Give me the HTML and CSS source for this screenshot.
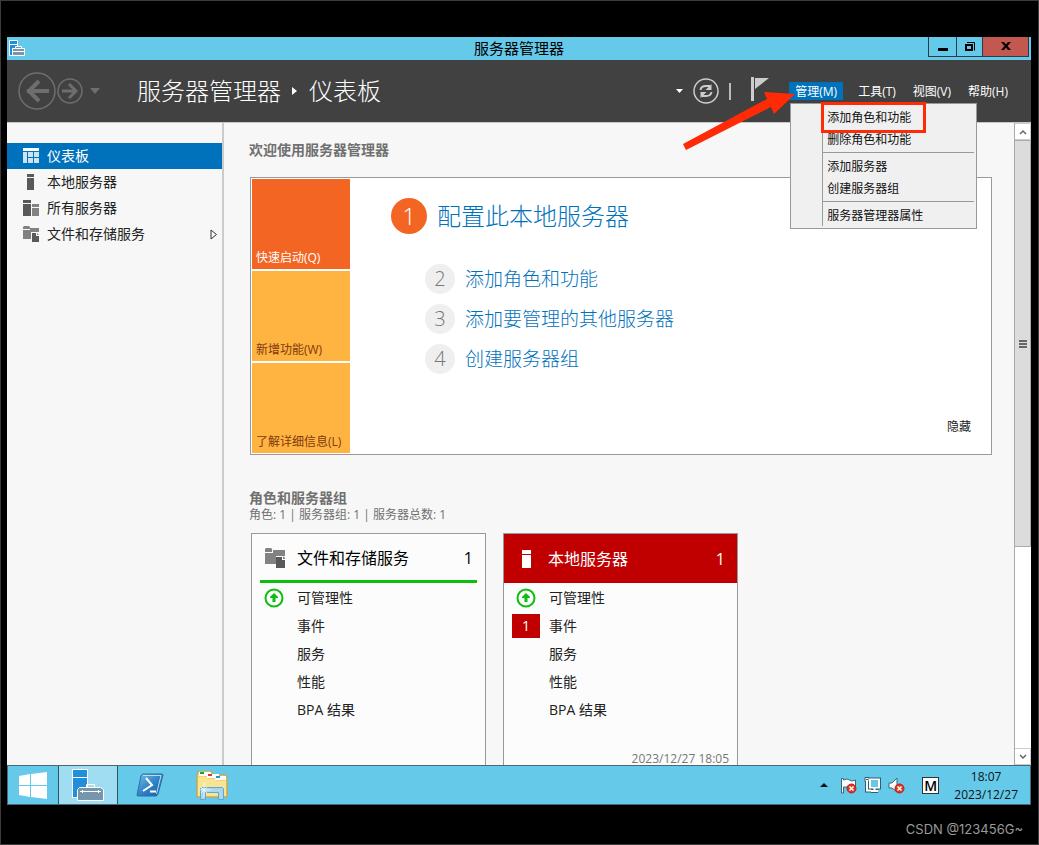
FILE: index.html
```html
<!DOCTYPE html>
<html lang="zh-CN">
<head>
<meta charset="utf-8">
<title>服务器管理器</title>
<link rel="stylesheet" href="styles.css">
</head>
<body>
<div class="desktop">
  <header class="titlebar">
    <svg class="app-icon" width="18" height="18" viewBox="0 0 18 18">
      <path d="M1.500 1.500h8v15h-8z" fill="#1f8fdc" stroke="#fff"/>
      <path d="M1 5.500h9" stroke="#fff"/>
      <path d="M4.500 9.500h3v-2h6v2h3v7h-12z" fill="#7795ab" stroke="#fff"/>
      <path d="M5 12.500h11M8 9.500h5" stroke="#fff"/>
    </svg>
    <h1 class="window-title">服务器管理器</h1>
    <div class="window-buttons">
      <button class="wb wb-min" aria-label="最小化"><svg width="12" height="12"><path d="M1 7h10v3H1z"/></svg></button>
      <button class="wb wb-max" aria-label="还原"><svg width="12" height="12" fill="none" stroke="#000"><path d="M2 4h6v5H2z" stroke-width="2"/><path d="M3 1.500h7.500v8" /></svg></button>
      <button class="wb wb-close" aria-label="关闭"><svg width="12" height="12"><path d="M1 1h3l2 2.500L8 1h3L7.500 5l3.500 4H8L6 6.500 4 9H1l3.500-4z"/></svg></button>
    </div>
  </header>

  <div class="toolbar">
    <nav class="history" aria-label="历史">
      <button class="plain" aria-label="后退"><svg width="38" height="38" fill="none" stroke="#6e6e6e"><circle cx="19" cy="19" r="18" stroke-width="1.500"/><path d="M9 19h22" stroke-width="4"/><path d="M21 9L11 19l10 10" stroke-width="4"/></svg></button>
      <button class="plain" aria-label="前进"><svg width="26" height="26" fill="none" stroke="#6e6e6e"><circle cx="13" cy="13" r="12" stroke-width="1.500"/><path d="M5 13h14" stroke-width="3"/><path d="M12 6l7 7-7 7" stroke-width="3"/></svg></button>
      <button class="plain caret-btn" aria-label="最近的页面"><svg width="10" height="6"><path d="M0 0h10L5 6z" fill="#6e6e6e"/></svg></button>
    </nav>
    <div class="breadcrumb">
      <span>服务器管理器</span>
      <svg width="6" height="10"><path d="M0 1l5 4-5 4z" fill="#fff"/></svg>
      <span>仪表板</span>
    </div>
    <div class="tools">
      <button class="plain" aria-label="更多"><svg width="7" height="4"><path d="M0 0h7L3.500 4z" fill="#fff"/></svg></button>
      <button class="plain" aria-label="刷新"><svg width="26" height="26" viewBox="0 0 26 26" fill="none" stroke="#ccc"><circle cx="13" cy="13" r="12" stroke-width="1.500"/><path d="M7.500 12q.5-4 5.500-4h4M18.500 14q-.5 4-5.500 4H9" stroke-width="2"/><path d="M18.500 6v6h-6zM7.500 20v-6h6z" fill="#ccc" stroke="none"/></svg></button>
      <span class="divider"></span>
      <button class="plain flag" aria-label="通知"><svg width="18" height="24"><path d="M0 0h3v24H0zM4 1h14L4 12z" fill="#ccc"/></svg></button>
    </div>
    <div class="menubar">
      <div class="menu-holder">
        <button class="menu-btn active">管理(M)</button>
        <div class="dropdown">
          <div class="dropdown-list">
            <button class="item">添加角色和功能</button>
            <button class="item">删除角色和功能</button>
            <hr>
            <button class="item">添加服务器</button>
            <button class="item">创建服务器组</button>
            <hr>
            <button class="item">服务器管理器属性</button>
          </div>
          <span class="highlight"></span>
        </div>
        <svg class="pointer" width="116" height="60" viewBox="0 0 116 60"><path d="M2 54L86 9l-3-7 31 2-21 20-3-7L5 60z" fill="#ff2a06"/></svg>
      </div>
      <button class="menu-btn">工具(T)</button>
      <button class="menu-btn">视图(V)</button>
      <button class="menu-btn">帮助(H)</button>
    </div>
  </div>

  <div class="body">
    <nav class="sidebar" aria-label="导航">
      <a class="side-item selected" href="#"><svg width="16" height="16"><path d="M0 0h16v3H0z" fill="#fff"/><path d="M0 4h4v11H0zM5 4h5v5H5zM11 4h5v5h-5zM5 10h5v5H5zM11 10h5v5h-5z" fill="#cce3f2"/></svg><span>仪表板</span></a>
      <a class="side-item" href="#"><svg width="16" height="16"><path d="M4 0h7v3H4zM4 4h7v12H4z" fill="#595959"/></svg><span>本地服务器</span></a>
      <a class="side-item" href="#"><svg width="16" height="16"><path d="M0 0h8v3H0zM0 4h8v12H0z" fill="#595959"/><path d="M9 4h7v3H9zM9 8h7v8H9z" fill="#828282"/></svg><span>所有服务器</span></a>
      <a class="side-item" href="#"><svg width="16" height="16"><path d="M0 1l1-1h5l1 1v2H0zM0 4h7V2h9v4H8v7H0z" fill="#828282"/><path d="M9 7h4v3h3v6H9z" fill="#595959"/><path d="M14 7l2 2H14z" fill="#828282"/></svg><span>文件和存储服务</span><svg class="expand" width="8" height="11" fill="none" stroke="#333"><path d="M1 1v9l5.500-4.500z"/></svg></a>
    </nav>

    <main class="content">
      <h2 class="section-title">欢迎使用服务器管理器</h2>
      <section class="welcome">
        <div class="tiles">
          <button class="tile hot">快速启动(Q)</button>
          <button class="tile">新增功能(W)</button>
          <button class="tile">了解详细信息(L)</button>
        </div>
        <div class="steps">
          <a class="step first" href="#"><span class="num">1</span><span>配置此本地服务器</span></a>
          <a class="step" href="#"><span class="num">2</span><span>添加角色和功能</span></a>
          <a class="step" href="#"><span class="num">3</span><span>添加要管理的其他服务器</span></a>
          <a class="step" href="#"><span class="num">4</span><span>创建服务器组</span></a>
        </div>
        <button class="hide-btn">隐藏</button>
      </section>

      <h2 class="section-title groups-title">角色和服务器组</h2>
      <p class="summary">角色: 1 | 服务器组: 1 | 服务器总数: 1</p>
      <div class="cards">
        <section class="card">
          <h3 class="card-head ok"><svg width="20" height="20"><path d="M0 1l1-1h5l1 1v3H0zM0 5h8V2h12v6h-9v8H0z" fill="#828282"/><path d="M11 9h6v3h3v8h-9z" fill="#595959"/><path d="M18 8l2 2v1h-2z" fill="#828282"/></svg><span>文件和存储服务</span><span class="count">1</span></h3>
          <ul class="rows">
            <li><span class="mark"><svg width="20" height="20"><circle cx="10" cy="10" r="8.500" fill="none" stroke="#0dbe0d" stroke-width="2"/><path d="M10 5l4 4v1h-2.500v4h-3v-4H6V9z" fill="#0dbe0d"/></svg></span>可管理性</li>
            <li><span class="mark"></span>事件</li>
            <li><span class="mark"></span>服务</li>
            <li><span class="mark"></span>性能</li>
            <li><span class="mark"></span>BPA 结果</li>
          </ul>
        </section>
        <section class="card">
          <h3 class="card-head alert"><svg width="20" height="20"><path d="M6 1h9v4H6zM6 6h9v13H6z" fill="#fff"/></svg><span>本地服务器</span><span class="count">1</span></h3>
          <ul class="rows">
            <li><span class="mark"><svg width="20" height="20"><circle cx="10" cy="10" r="8.500" fill="none" stroke="#0dbe0d" stroke-width="2"/><path d="M10 5l4 4v1h-2.500v4h-3v-4H6V9z" fill="#0dbe0d"/></svg></span>可管理性</li>
            <li><span class="mark bad">1</span>事件</li>
            <li><span class="mark"></span>服务</li>
            <li><span class="mark"></span>性能</li>
            <li><span class="mark"></span>BPA 结果</li>
          </ul>
          <p class="stamp">2023/12/27 18:05</p>
        </section>
      </div>
    </main>

    <div class="scrollbar">
      <button class="sb-btn" aria-label="向上滚动"><svg width="8" height="6" fill="none" stroke="#666" stroke-width="1.500"><path d="M1 5l3-3 3 3"/></svg></button>
      <div class="track"><div class="thumb"><svg width="8" height="8"><path d="M0 0h8v2H0zM0 3h8v2H0zM0 6h8v2H0z" fill="#666"/></svg></div></div>
      <button class="sb-btn" aria-label="向下滚动"><svg width="8" height="6" fill="none" stroke="#666" stroke-width="1.500"><path d="M1 1l3 3 3-3"/></svg></button>
    </div>
  </div>

  <footer class="taskbar">
    <button class="task start" aria-label="开始"><svg width="28" height="27"><path d="M0 4l11-2v11H0zM12 2l16-2v13H12zM0 14h11v11L0 23zM12 14h16v13l-16-2z" fill="#fff"/></svg></button>
    <button class="task running" aria-label="服务器管理器"><svg width="32" height="32"><path d="M.5.500h15v28H.5z" fill="#1f8fdc" stroke="#fff"/><path d="M0 8.500h16" stroke="#fff"/><path d="M14.500 18v-2.500h8V18" fill="none" stroke="#fff"/><path d="M5.500 20.500l2-2h21l3 2v11h-26z" fill="#7795ab" stroke="#fff"/><path d="M8 22.500h21M10.500 21v3M26.500 21v3" stroke="#fff"/></svg></button>
    <button class="task pinned" aria-label="PowerShell"><svg width="28" height="24" viewBox="0 0 28 24"><defs><linearGradient id="ps" x1="0" y1="0" x2="1" y2="1"><stop offset="0" stop-color="#7cc0e6"/><stop offset=".5" stop-color="#2f86c8"/><stop offset="1" stop-color="#1958a6"/></linearGradient></defs><path d="M7 1h19q1 0 1 1l-5 19q-1 2-2 2H2q-1 0-1-1L5 3q1-2 2-2z" fill="url(#ps)" stroke="#2c6da4"/><path d="M7 2.500h18L20.500 21" fill="none" stroke="#b8def2"/><path d="M10 5l6 7-9 6M14 18.500h6" fill="none" stroke="#fff" stroke-width="2"/></svg></button>
    <button class="task pinned" aria-label="文件资源管理器"><svg width="32" height="29" viewBox="0 0 32 29"><path d="M1 26V3l2-3h12l2 4h13l1 2v20z" fill="#f3d36b" stroke="#c99c35"/><path d="M3 1h12v4H3zM11 3h12v4H11zM19 5h11v4H19z" fill="#fff"/><path d="M4 1h4v2H4z" fill="#1ea32d"/><path d="M12 3h4v2h-4z" fill="#d43d24"/><path d="M20 5h4v2h-4z" fill="#2590e0"/><path d="M2 6h8l2 2h7l2 2h9v15H2z" fill="#f9e493"/><path d="M4.500 28.500v-11l1-1h21l1 1v11h-5v-7h-13v7z" fill="#a9d8ee" stroke="#5fa7cf"/><path d="M8 11v15M3 19h12M5 16l6 6M11 16l-6 6" stroke="#fff" stroke-opacity=".7"/></svg></button>
    <div class="tray">
      <button class="plain" aria-label="显示隐藏的图标"><svg width="8" height="4"><path d="M0 4h8L4 0z" fill="#111"/></svg></button>
      <button class="plain" aria-label="操作中心"><svg width="17" height="17"><path d="M1.500 16V1.500h2V3q4-2 6 0t6 0v7h-12v6z" fill="#fff" stroke="#3c6576"/><circle cx="11.500" cy="11.500" r="4.500" fill="#df3426" stroke="#b52318"/><path d="M9.500 9.500l4 4m0-4l-4 4" stroke="#fff" stroke-width="1.500"/></svg></button>
      <button class="plain" aria-label="网络"><svg width="17" height="16" fill="none"><path d="M6 2.500h9v8H6zM10.500 11v3M7 14h7M3 4v9.500h4" stroke="#315f72" stroke-width="4"/><path d="M1 .5h4v4H1z" fill="#fff" stroke="#315f72"/><path d="M6 2.500h9v8H6zM10.500 11v3M7 14h7M3 4v9.500h4" stroke="#fff" stroke-width="2"/><path d="M7 3.500h7v6H7z" fill="#65caea"/><path d="M2 2h2v1H2z" fill="#315f72"/></svg></button>
      <button class="plain" aria-label="音量"><svg width="17" height="17"><path d="M1 6h3l5-5v14l-5-4H1z" fill="#fff" stroke="#3c6576"/><circle cx="11.500" cy="11.500" r="4.500" fill="#df3426" stroke="#b52318"/><path d="M9.500 9.500l4 4m0-4l-4 4" stroke="#fff" stroke-width="1.500"/></svg></button>
      <button class="ime">M</button>
      <div class="clock"><span>18:07</span><span>2023/12/27</span></div>
    </div>
  </footer>
</div>
<p class="credit">CSDN @123456G~</p>
</body>
</html>
```
FILE: styles.css
```css
* { box-sizing: border-box; }
html { height: 100%; }
body {
  margin: 0;
  height: 100%;
  display: flex;
  flex-direction: column;
  padding: 36px 7px 0 6px;
  background: #000;
  border: 1px solid #3c3c3c;
  font: 12px/16px "Open Sans", "Noto Sans CJK SC", sans-serif;
  color: #222;
}
h1, h2, h3, p, ul { margin: 0; padding: 0; font-weight: 400; }
ul { list-style: none; }
a { color: inherit; text-decoration: none; }
button { font: inherit; color: inherit; border: 0; padding: 0; margin: 0; background: none; }
svg { display: block; flex: none; }
.plain { display: flex; align-items: center; }

.desktop { flex: 1; min-height: 0; display: flex; flex-direction: column; }

.titlebar {
  display: grid;
  grid-template-columns: 1fr auto 1fr;
  height: 23px;
  background: #65caea;
}
.app-icon { margin: 2px 1px; }
.window-title { font-size: 15px; line-height: 22px; color: #000; }
.window-buttons { display: flex; justify-content: flex-end; padding-right: 2px; height: 20px; }
.wb {
  display: flex;
  align-items: center;
  justify-content: center;
  border: solid #2c3b42;
  border-width: 0 0 1px 1px;
}
.wb-min { width: 28px; }
.wb-max { width: 26px; }
.wb-close { width: 47px; background: #c25850; border-right-width: 1px; }

.toolbar {
  display: flex;
  align-items: center;
  height: 63px;
  padding: 0 17px 0 11px;
  background: #414141;
  border-bottom: 1px solid #c8c8c8;
  color: #fff;
}
.history { display: flex; align-items: center; gap: 1px; }
.caret-btn { padding-left: 6px; }
.breadcrumb {
  display: flex;
  align-items: center;
  gap: 11px;
  padding-left: 37px;
  font-size: 24px;
  line-height: 32px;
  font-weight: 300;
}
.tools { display: flex; align-items: center; gap: 10px; margin-left: auto; }
.divider { width: 2px; height: 17px; background: #bbb; }
.flag { padding: 0 20px 4px 10px; }
.menubar { display: flex; gap: 5px; }
.menu-holder { position: relative; margin-right: 4px; }
.menu-btn { display: block; padding: 2px 6px 0; height: 18px; line-height: 16px; }
.menu-btn.active { background: #0072bc; }
.dropdown {
  position: absolute;
  z-index: 2;
  top: 21px;
  left: 1px;
  width: 187px;
  padding: 2px 2px 2px 31px;
  background: #f0f0f0;
  border: 1px solid #999;
  color: #111;
}
.dropdown-list { border-left: 1px solid #999; }
.item { display: block; width: 100%; height: 22px; padding: 2px 0 0 4px; text-align: left; }
.dropdown hr { margin: 2px 0; border: 0; height: 1px; background: #999; }
.highlight {
  position: absolute;
  top: -2px;
  left: 30px;
  width: 105px;
  height: 31px;
  border: 3px solid #ff2a06;
}
.pointer { position: absolute; z-index: 3; top: 8px; right: 46px; }

.body { flex: 1; min-height: 0; display: flex; background: #f7f7f7; }
.sidebar { width: 217px; padding-top: 20px; border-right: 2px solid #ccc; font-size: 14px; }
.side-item { display: flex; align-items: center; gap: 8px; height: 26px; padding: 0 4px 0 16px; }
.side-item.selected { background: #0072bc; color: #fff; }
.expand { margin-left: auto; }

.content { flex: 1; min-width: 0; overflow: hidden; padding: 17px 22px 0 25px; }
.section-title { font-size: 14px; line-height: 20px; font-weight: 700; color: #707070; }
.welcome {
  display: flex;
  margin: 17px 0 0 1px;
  padding: 1px;
  background: #fff;
  border: 1px solid #999;
}
.tiles { display: flex; flex-direction: column; gap: 2px; }
.tile {
  display: flex;
  align-items: flex-end;
  width: 98px;
  height: 90px;
  padding: 0 4px 3px;
  background: #ffb340;
  color: #803a10;
  white-space: nowrap;
}
.tile.hot { background: #f36523; color: #fff; }
.steps { flex: 1; display: flex; flex-direction: column; gap: 10px; padding: 19px 0 0 75px; }
.step { display: flex; align-items: center; gap: 10px; color: #0072bc; font-size: 19px; font-weight: 300; }
.num {
  width: 30px;
  border-radius: 50%;
  background: #efefef;
  color: #777;
  font-size: 20px;
  line-height: 30px;
  text-align: center;
}
.first { font-size: 24px; margin: 0 0 20px -34px; }
.first .num { width: 36px; line-height: 36px; font-size: 24px; background: #f36523; color: #fff; }
.hide-btn { align-self: flex-end; padding: 0 19px 18px 0; }

.groups-title { padding-top: 34px; line-height: 18px; }
.summary { color: #707070; }
.cards { display: flex; gap: 17px; padding: 10px 0 0 2px; }
.card { width: 235px; height: 244px; display: flex; flex-direction: column; background: #fcfcfc; border: 1px solid #999; border-bottom: 0; }
.card-head {
  display: flex;
  align-items: center;
  gap: 12px;
  height: 49px;
  font-size: 16px;
  color: #000;
}
.card-head.ok { margin: 0 8px; padding: 2px 4px 0 5px; border-bottom: 3px solid #0dbe0d; }
.card-head.alert { padding: 0 12px; background: #c00000; color: #fff; }
.count { margin-left: auto; }
.rows { font-size: 14px; padding-top: 1px; }
.rows li { display: flex; align-items: center; gap: 9px; height: 28px; padding-left: 8px; }
.mark { display: flex; justify-content: center; width: 28px; line-height: 24px; }
.mark.bad { background: #c00000; color: #fff; }
.stamp { margin-top: auto; padding: 0 8px 12px; line-height: 12px; text-align: right; color: #777; }

.scrollbar { width: 17px; display: flex; flex-direction: column; background: #fff; border-left: 1px solid #aaa; }
.sb-btn { display: flex; align-items: center; justify-content: center; height: 17px; border: solid #ccc; border-width: 1px 1px 1px 0; }
.track { flex: 1; }
.thumb {
  display: flex;
  align-items: center;
  justify-content: center;
  height: 67%;
  background: #dcdcdc;
  border: 1px solid #aaa;
  border-left: 0;
}

.taskbar { display: flex; height: 40px; background: #65caea; border: 1px solid #4c6872; }
.task { display: flex; align-items: center; justify-content: center; width: 62px; }
.pinned { padding-left: 2px; }
.start { width: 50px; padding-right: 1px; }
.running { width: 60px; background: #a0ddf3; border: solid #2d5563; border-width: 0 1px; }
.tray { display: flex; align-items: center; gap: 7px; margin-left: auto; padding-right: 12px; color: #111; }
.tray .plain:first-child { margin-right: 5px; }
.ime { width: 17px; height: 17px; margin: 0 8px 0 10px; background: #fff; border: 1px solid #333; color: #000; font-size: 14px; line-height: 15px; font-weight: 600; }
.clock { display: flex; flex-direction: column; padding-top: 2px; text-align: center; line-height: 18px; }
.credit { height: 39px; padding: 14px 8px 0; text-align: right; color: #999; font: 13px/20px Inter, sans-serif; }
```
